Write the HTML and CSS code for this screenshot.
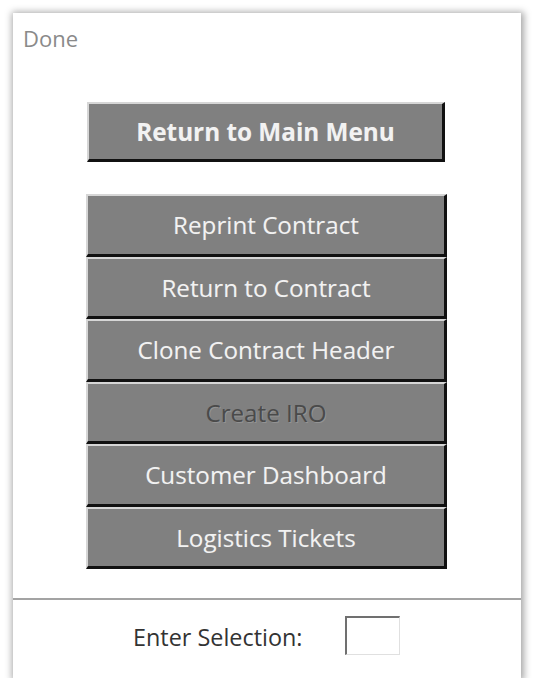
FILE: index.html
```html
<!DOCTYPE html>
<html>
<head>
<meta charset="utf-8">
<link rel="stylesheet" href="styles.css">
</head>
<body>
<div class="window">
  <div class="content">
    <div class="title">Done</div>
    <button class="btn btn-main">Return to Main Menu</button>
    <div class="group">
      <button class="btn btn-item">Reprint Contract</button>
      <button class="btn btn-item">Return to Contract</button>
      <button class="btn btn-item">Clone Contract Header</button>
      <button class="btn btn-item disabled">Create IRO</button>
      <button class="btn btn-item">Customer Dashboard</button>
      <button class="btn btn-item">Logistics Tickets</button>
    </div>
  </div>
  <div class="footer">
    <span class="label">Enter Selection:</span>
    <input class="sel" type="text">
  </div>
</div>
</body>
</html>
```
FILE: styles.css
```css
html, body {
  margin: 0;
  padding: 0;
  background: #ffffff;
}
body {
  font-family: "Open Sans", "Noto Sans", sans-serif;
}
.window {
  margin: 13px 0 0 13px;
  width: 508px;
  height: 665px;
  background: #fff;
  box-shadow: 1px 1px 7px 2px rgba(0, 0, 0, 0.35);
  display: flex;
  flex-direction: column;
}
.content {
  flex: 1;
  display: flex;
  flex-direction: column;
  align-items: flex-start;
}
.title {
  margin: 11px 0 0 10px;
  font-size: 22px;
  line-height: 28px;
  color: #8a8a8a;
}
.btn {
  display: flex;
  align-items: center;
  justify-content: center;
  background: #808080;
  color: #f2f2f2;
  font-family: "Open Sans", "Noto Sans", sans-serif;
  padding: 0;
  margin: 0;
  box-sizing: border-box;
  border-style: solid;
  border-width: 2px 3px 3px 2px;
  border-color: #d6d6d6 #111 #111 #d6d6d6;
  text-shadow: 0 0 1px rgba(255,255,255,0.2);
}
.btn-main {
  margin: 50px 0 0 74px;
  width: 358px;
  height: 60px;
  font-size: 24.3px;
  font-weight: bold;
}
.group {
  margin: 32px 0 0 73px;
  width: 361px;
  display: flex;
  flex-direction: column;
}
.btn-item {
  width: 361px;
  height: 62.5px;
  font-size: 24.2px;
}
.btn-item.disabled {
  color: #4a4a4a;
  text-shadow: 1px 1px 0 rgba(160,160,160,0.6);
}
.footer {
  height: 80px;
  border-top: 2px solid #a3a3a3;
  display: flex;
  align-items: center;
  padding: 0 0 8px 120px;
  box-sizing: border-box;
}
.label {
  font-size: 23.4px;
  color: #333;
  margin-top: 4px;
}
.sel {
  margin-left: 43px;
  width: 55px;
  height: 39px;
  box-sizing: border-box;
  border-style: solid;
  border-width: 2px 1px 1px 2px;
  border-color: #707070 #e0e0e0 #e0e0e0 #707070;
  background: #fff;
  padding: 0;
  outline: none;
}
```
